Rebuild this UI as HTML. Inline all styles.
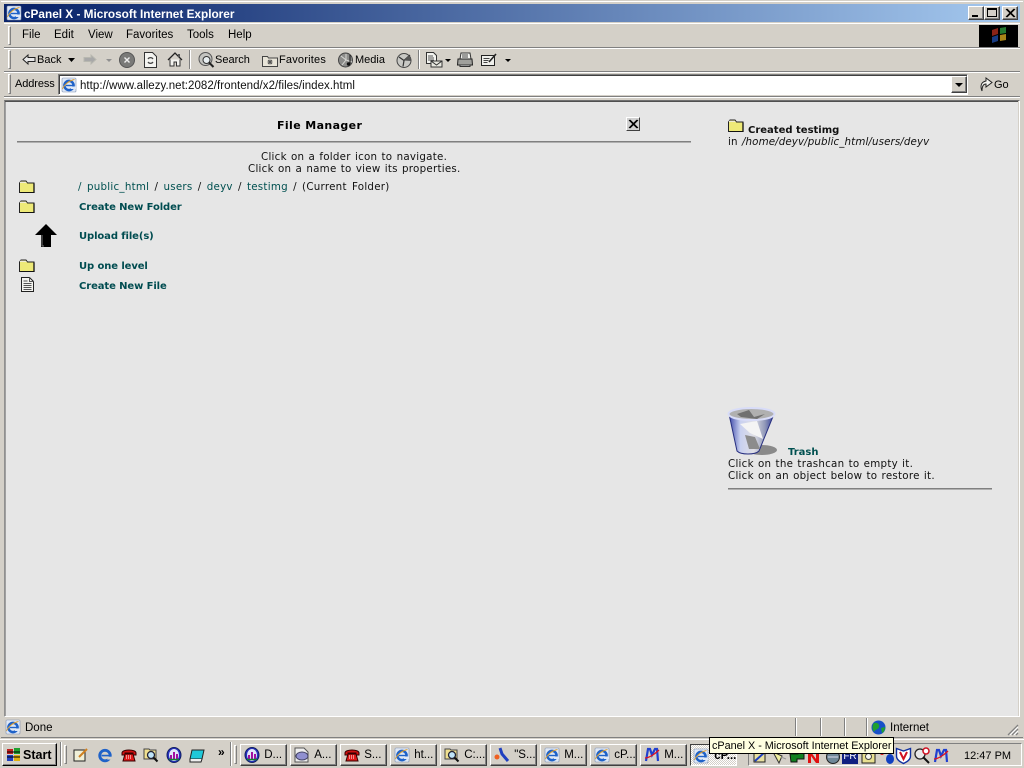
<!DOCTYPE html>
<html><head><meta charset="utf-8"><title>cPanel X - Microsoft Internet Explorer</title>
<style>
html,body{margin:0;padding:0;width:1024px;height:768px;overflow:hidden;background:#d4d0c8;position:relative;font-family:"Liberation Sans",sans-serif;font-size:11px;color:#000}
div,span.t{position:absolute;white-space:nowrap;box-sizing:border-box}
.t{line-height:14px;height:14px}
.v{font-family:"DejaVu Sans",sans-serif;font-size:10.3px;line-height:12px;height:12px;color:#111;letter-spacing:.25px;word-spacing:.7px}
.l{color:#005050}
.b{font-weight:bold;color:#004c50;font-size:10px;letter-spacing:-.1px;word-spacing:0}
.bt{border:1px solid;border-color:#fff #404040 #404040 #fff;background:#d4d0c8;box-shadow:inset -1px -1px 0 #808080}
.hl{left:0;width:1024px;height:1px}
.grip{width:3px;border:1px solid;border-color:#fff #808080 #808080 #fff}
.sep{width:2px;border-left:1px solid #808080;border-right:1px solid #fff}
.tb{top:744px;height:22px;width:47px;border:1px solid;border-color:#fff #404040 #404040 #fff;background:#d4d0c8;box-shadow:inset -1px -1px 0 #808080;font-size:11.5px;line-height:21px;padding-left:20px}
.m{font-size:11.5px}
.k{font-size:11px}
svg{position:absolute;overflow:visible}
</style></head><body>
<svg width="0" height="0" style="position:absolute"><defs>
<symbol id="ie" viewBox="0 0 16 16"><rect x="1" y="1" width="14" height="14" rx="1" fill="#dfe8f6" stroke="#8090b0" stroke-width=".6"/><circle cx="8" cy="8.500" r="4.600" fill="none" stroke="#1f62c8" stroke-width="2.500"/><rect x="5" y="7.800" width="7" height="1.400" fill="#1f62c8"/><rect x="10" y="9.500" width="5" height="2.500" fill="#dfe8f6"/><path d="M1.500 12C3 8 8 3.500 13.500 2.500" fill="none" stroke="#e0a030" stroke-width=".9"/></symbol>
<symbol id="fo" viewBox="0 0 16 13"><path d="M.5 3 2 1h5l1.500 2h6.500v9.500H.5z" fill="#eeea78" stroke="#222"/><path d="M1 1.800h5.500L8 3H1z" fill="#f0ecd8"/><path d="M15 3.500v9.300H1.500" fill="none" stroke="#111" stroke-width="1.300"/></symbol>
<symbol id="pg" viewBox="0 0 13 15"><path d="M.5.500h8l4 4v10H.5z" fill="#f4f4f0" stroke="#222"/><path d="M8.500.500v4h4M2.500 4h4M2.500 6.500h8M2.500 8.500h8M2.500 10.500h8M2.500 12.500h8" fill="none" stroke="#555"/></symbol>
<symbol id="mag" viewBox="0 0 16 16"><path d="M1 2h5l1 1h6v9H1z" fill="#f0e090" stroke="#444"/><circle cx="8" cy="8" r="3.500" fill="#bfe4f8" stroke="#223" stroke-width="1.300"/><path d="m10.500 10.500 4 4" stroke="#111" stroke-width="2"/></symbol>
<symbol id="ph" viewBox="0 0 16 16"><path d="M1 6C1 2 15 2 15 6v2h-3V6H4v2H1z" fill="#d01010" stroke="#300"/><path d="M4 7h8l2 7H2z" fill="#e01818" stroke="#300"/><path d="M5 9h6M5 11h6" stroke="#fff" stroke-dasharray="1 1"/></symbol>
<symbol id="dm" viewBox="0 0 16 16"><ellipse cx="8" cy="8" rx="7" ry="7.500" fill="#2830c0" stroke="#102060"/><ellipse cx="8" cy="8" rx="5" ry="6" fill="#e0e8f8"/><path d="M4 12V8h2v4zM7 12V5h2v7zM10 12V7h2v5z" fill="#a010a0"/><path d="M3 12.500h10" stroke="#108030" stroke-width="1.500"/></symbol>
<symbol id="m" viewBox="0 0 16 16"><path d="M2 14 4 2h2l2 6 3-6h2l1 12" fill="none" stroke="#2040d0" stroke-width="2.200"/><path d="M1 11C5 11 11 7 15 3" fill="none" stroke="#e01020" stroke-width="1.300"/></symbol>
</defs></svg>

<!-- window frame + title -->
<div style="left:0;top:0;width:1024px;height:1px;background:#d4d0c8"></div>
<div style="left:1px;top:1px;width:1022px;height:1px;background:#fff"></div>
<div style="left:4px;top:4px;width:1016px;height:18px;background:linear-gradient(90deg,#0a246a 0%,#0a246a 3%,#a6caf0 100%)"></div>
<svg style="left:6px;top:5px" width="16" height="16"><use href="#ie"/></svg>
<span class="t" style="position:absolute;left:24px;top:7px;color:#fff;font-weight:bold;font-size:11.8px">cPanel X - Microsoft Internet Explorer</span>
<div class="bt" style="left:968px;top:6px;width:16px;height:14px"><div style="left:3px;top:8px;width:6px;height:2px;background:#000"></div></div>
<div class="bt" style="left:984px;top:6px;width:16px;height:14px"><div style="left:2px;top:1px;width:10px;height:9px;border:1px solid #000;border-top-width:2px"></div></div>
<div class="bt" style="left:1002px;top:6px;width:16px;height:14px"><svg style="left:3px;top:2px" width="9" height="8"><path d="M0 0 8 8M1 0 9 8M8 0 0 8M9 0 1 8" stroke="#000"/></svg></div>

<!-- band lines -->
<div class="hl" style="top:23px;background:#fff;left:4px;width:1016px"></div>
<div class="hl" style="top:47px;background:#808080;left:4px;width:1016px"></div>
<div class="hl" style="top:48px;background:#fff;left:4px;width:1016px"></div>
<div class="hl" style="top:71px;background:#808080;left:4px;width:1016px"></div>
<div class="hl" style="top:72px;background:#fff;left:4px;width:1016px"></div>
<div class="hl" style="top:96px;background:#808080;left:4px;width:1016px"></div>
<div class="hl" style="top:97px;background:#fff;left:4px;width:1016px"></div>

<!-- menu -->
<div class="grip" style="left:8px;top:26px;height:19px"></div>
<span class="t m" style="position:absolute;left:22px;top:28px">File</span>
<span class="t m" style="position:absolute;left:54px;top:28px">Edit</span>
<span class="t m" style="position:absolute;left:88px;top:28px">View</span>
<span class="t m" style="position:absolute;left:126px;top:28px">Favorites</span>
<span class="t m" style="position:absolute;left:187px;top:28px">Tools</span>
<span class="t m" style="position:absolute;left:228px;top:28px">Help</span>
<div style="left:979px;top:25px;width:39px;height:22px;background:#000"></div>
<svg style="left:991px;top:27px" width="17" height="16" opacity=".75"><path d="M1 3 7 1v6L1 9z" fill="#b83020"/><path d="M9 1l6-1v6L9 7z" fill="#30a040"/><path d="M1 10l6-2v6l-6 2z" fill="#2050b0"/><path d="M9 8l6-1v6l-6 1z" fill="#e0b020"/></svg>

<!-- toolbar -->
<div class="grip" style="left:8px;top:50px;height:19px"></div>
<svg style="left:21px;top:53px" width="15" height="13"><path d="M7 2 2 6.500 7 11V8.500h7v-4H7z" fill="#e8e8e8" stroke="#222"/></svg>
<span class="t k" style="position:absolute;left:37px;top:53px">Back</span>
<svg style="left:68px;top:58px" width="7" height="4"><path d="M0 0h7L3.500 4z" fill="#000"/></svg>
<svg style="left:83px;top:53px" width="15" height="13"><path d="M8 2l5 4.500L8 11V8.500H1v-4h7z" fill="#a8a8a8" stroke="#b8b8b0"/></svg>
<svg style="left:106px;top:59px" width="6" height="3"><path d="M0 0h6L3 3z" fill="#909090"/></svg>
<svg style="left:119px;top:52px" width="16" height="16"><circle cx="8" cy="8" r="7.500" fill="#7a7a78" stroke="#555"/><path d="m5.500 5.500 5 5m0-5-5 5" stroke="#eee" stroke-width="1.400"/></svg>
<svg style="left:144px;top:52px" width="13" height="16"><path d="M.5.500h8l4 4v11H.5z" fill="#f4f4f0" stroke="#333"/><path d="M4 7a3 3 0 0 1 5 0M9 10a3 3 0 0 1-5 0" fill="none" stroke="#444" stroke-width="1.200"/></svg>
<svg style="left:167px;top:52px" width="16" height="15"><path d="M1 8 8 1l7 7" fill="none" stroke="#222" stroke-width="1.300"/><path d="M3 7.500V14h4v-4h2.500v4H13V7.500" fill="#f4f4f0" stroke="#333"/><rect x="11" y="2" width="2" height="3" fill="#555"/></svg>
<div class="sep" style="left:189px;top:50px;height:19px"></div>
<svg style="left:198px;top:52px" width="17" height="16"><circle cx="7.500" cy="7" r="6.500" fill="#c4c4c0" stroke="#555"/><circle cx="8.500" cy="8" r="3.500" fill="#e8eef0" stroke="#333"/><path d="m11 10.500 4.500 4.500" stroke="#222" stroke-width="2"/></svg>
<span class="t k" style="position:absolute;left:215px;top:53px">Search</span>
<svg style="left:262px;top:54px" width="16" height="13"><path d="M.5 2.500h5l1 1.500h9v8.500H.5z" fill="#e8e4d8" stroke="#444"/><path d="M8 5.500v5M5.500 8h5M6 6l4 4m0-4-4 4" stroke="#555"/></svg>
<span class="t k" style="position:absolute;left:279px;top:53px;letter-spacing:.2px">Favorites</span>
<svg style="left:338px;top:52px" width="17" height="16"><circle cx="7.500" cy="8" r="7" fill="#8c8c8a" stroke="#444"/><path d="M3 4 8 8 4 13M8 2v6l6 2" stroke="#d8d8d4" fill="none"/><path d="M12 3v9" stroke="#111"/><circle cx="10.500" cy="12" r="1.700" fill="#111"/></svg>
<span class="t k" style="position:absolute;left:355px;top:53px">Media</span>
<svg style="left:396px;top:52px" width="17" height="16"><circle cx="8" cy="8.500" r="7" fill="#c8c8c4" stroke="#444"/><path d="M8 8.500 14 3M8 8.500 3 5M8 8.500l-1 6" stroke="#333" stroke-width="1.200"/><path d="M8 8.500 15 9 13 3z" fill="#555"/></svg>
<div class="sep" style="left:418px;top:50px;height:19px"></div>
<svg style="left:426px;top:52px" width="18" height="16"><path d="M.5.500h7l3 3v8H.5z" fill="#f4f4f0" stroke="#333"/><path d="M2 4h5M2 6h6M2 8h6" stroke="#555"/><path d="M5 9h11v6H5z" fill="#e8e8e0" stroke="#333"/><path d="m5 9 5.500 4L16 9" fill="none" stroke="#333"/></svg>
<svg style="left:445px;top:59px" width="6" height="3"><path d="M0 0h6L3 3z" fill="#000"/></svg>
<svg style="left:457px;top:52px" width="16" height="15"><path d="M4 1h9l1 6H3z" fill="#f4f4f0" stroke="#333"/><path d="M1 7h14l.5 6H.5z" fill="#a0a09c" stroke="#222"/><path d="M3 13h10v1.500H3z" fill="#eee" stroke="#333"/><path d="M5 3h6M5 5h6" stroke="#444"/></svg>
<svg style="left:481px;top:52px" width="17" height="15"><path d="M.5 3.500h13v10H.5z" fill="#f0f0ec" stroke="#222"/><path d="M2.500 6.500h6M2.500 8.500h5M2.500 10.500h4" stroke="#444"/><path d="m8 10 7-8" stroke="#222" stroke-width="1.600"/></svg>
<svg style="left:505px;top:59px" width="6" height="3"><path d="M0 0h6L3 3z" fill="#000"/></svg>

<!-- address -->
<div class="grip" style="left:8px;top:74px;height:20px"></div>
<span class="t k" style="position:absolute;left:15px;top:77px;letter-spacing:-.1px">Address</span>
<div style="left:58px;top:74px;width:910px;height:21px;background:#fff;border:1px solid;border-color:#808080 #fff #fff #808080;box-shadow:inset 1px 1px 0 #404040"></div>
<svg style="left:61px;top:77px" width="16" height="16"><use href="#ie"/></svg>
<span class="t" style="position:absolute;left:80px;top:79px;font-size:11.5px;letter-spacing:.04px;color:#101010">http://www.allezy.net:2082/frontend/x2/files/index.html</span>
<div class="bt" style="left:951px;top:76px;width:16px;height:17px"><svg style="left:3px;top:6px" width="8" height="4"><path d="M0 0h8L4 4z" fill="#000"/></svg></div>
<svg style="left:979px;top:76px" width="14" height="17"><path d="M3 15C1 10 2 6 7 5V2l6 4.500L7 11V8C4 8 3 11 3 15z" fill="#f4f4f0" stroke="#222"/></svg>
<span class="t k" style="position:absolute;left:994px;top:78px">Go</span>

<!-- content -->
<div style="left:4px;top:100px;width:1016px;height:617px;background:#e6e6e6;border:1px solid;border-color:#707070 #fff #fff #909090;box-shadow:inset 0 1px 0 #505050,inset 1px 0 0 #a0a0a0"></div>
<div style="left:1018px;top:101px;width:1px;height:615px;background:#d4d0c8"></div>

<span class="t" style="position:absolute;left:277px;top:119px;font-family:'DejaVu Sans',sans-serif;font-weight:bold;font-size:11px;letter-spacing:.38px">File Manager</span>
<div style="left:626px;top:117px;width:14px;height:14px;border:1px solid;border-color:#fff #404040 #404040 #fff;background:#d0d0d0"><svg style="left:2px;top:2px" width="9" height="8"><path d="M0 0 8 8M1 0 9 8M8 0 0 8M9 0 1 8" stroke="#000"/></svg></div>
<div style="left:17px;top:141px;width:674px;height:1px;background:#808080"></div>
<div style="left:17px;top:142px;width:674px;height:1px;background:#b0b0b0"></div>

<span class="t v" style="position:absolute;left:261px;top:151px">Click on a folder icon to navigate.</span>
<span class="t v" style="position:absolute;left:248px;top:163px">Click on a name to view its properties.</span>

<svg style="left:19px;top:180px" width="16" height="13"><use href="#fo"/></svg>
<span class="t v" style="position:absolute;left:78px;top:181px;word-spacing:1.7px"><span class="l">/ public_html</span> / <span class="l">users</span> / <span class="l">deyv</span> / <span class="l">testimg</span> / (Current Folder)</span>
<svg style="left:19px;top:200px" width="16" height="13"><use href="#fo"/></svg>
<span class="t v b" style="position:absolute;left:79px;top:202px">Create New Folder</span>
<svg style="left:34px;top:223px" width="24" height="25"><path d="M12 1 23 12h-6v12H7V12H1z" fill="#000"/><path d="M8 12v11h2" fill="none" stroke="#777"/></svg>
<span class="t v b" style="position:absolute;left:79px;top:231px">Upload file(s)</span>
<svg style="left:19px;top:259px" width="16" height="13"><use href="#fo"/></svg>
<span class="t v b" style="position:absolute;left:79px;top:261px">Up one level</span>
<svg style="left:21px;top:277px" width="13" height="15"><use href="#pg"/></svg>
<span class="t v b" style="position:absolute;left:79px;top:281px">Create New File</span>

<svg style="left:728px;top:119px" width="16" height="13"><use href="#fo"/></svg>
<span class="t v b" style="position:absolute;left:748px;top:125px;color:#111;letter-spacing:0">Created testimg</span>
<span class="t v" style="position:absolute;left:728px;top:136px;letter-spacing:.1px;word-spacing:1px">in <i>/home/deyv/public_html/users/deyv</i></span>

<svg style="left:727px;top:405px" width="52" height="52">
<defs><linearGradient id="tr" x1="0" x2="1"><stop offset="0" stop-color="#3c48a8"/><stop offset=".25" stop-color="#c8d0f0"/><stop offset=".55" stop-color="#e0e0e6"/><stop offset=".8" stop-color="#9098b8"/><stop offset="1" stop-color="#303c98"/></linearGradient></defs>
<ellipse cx="35" cy="45" rx="15" ry="5" fill="#8a8a8a"/>
<path d="M2 9 10 46C14 50 28 50 32 46L47 9z" fill="url(#tr)" stroke="#283080"/>
<ellipse cx="24.500" cy="9" rx="23" ry="6" fill="#b0b0b0" stroke="#d8dcf8" stroke-width="2"/>
<path d="M10 9 22 5 27 12 38 9 30 14 14 12z" fill="#707070"/>
<path d="M13 19 30 16 36 34 23 28z" fill="#f4f4f4"/>
<path d="M18 30 28 32 33 44 22 44z" fill="#8c8c8c"/>
</svg>
<span class="t v b" style="position:absolute;left:788px;top:447px;color:#005050;letter-spacing:0">Trash</span>
<span class="t v" style="position:absolute;left:728px;top:458px">Click on the trashcan to empty it.</span>
<span class="t v" style="position:absolute;left:728px;top:470px">Click on an object below to restore it.</span>
<div style="left:728px;top:488px;width:264px;height:1px;background:#808080"></div>
<div style="left:728px;top:489px;width:264px;height:1px;background:#b0b0b0"></div>

<!-- status bar -->
<svg style="left:5px;top:719px" width="16" height="16"><use href="#ie"/></svg>
<span class="t m" style="position:absolute;left:25px;top:721px">Done</span>
<div style="left:795px;top:718px;width:1px;height:18px;background:#808080"></div><div style="left:796px;top:718px;width:1px;height:18px;background:#fff"></div>
<div style="left:820px;top:718px;width:1px;height:18px;background:#808080"></div><div style="left:821px;top:718px;width:1px;height:18px;background:#fff"></div>
<div style="left:844px;top:718px;width:1px;height:18px;background:#808080"></div><div style="left:845px;top:718px;width:1px;height:18px;background:#fff"></div>
<div style="left:866px;top:718px;width:1px;height:18px;background:#808080"></div><div style="left:867px;top:718px;width:1px;height:18px;background:#fff"></div>
<svg style="left:871px;top:720px" width="15" height="15"><circle cx="7.500" cy="7.500" r="7" fill="#1850c8"/><path d="M3 3C6 2 9 4 8 7S4 9 3 12C1 9 1 5 3 3zM10 8l4-1c0 3-1 5-3 6z" fill="#20a030"/></svg>
<span class="t m" style="position:absolute;left:890px;top:721px">Internet</span>
<svg style="left:1007px;top:724px" width="12" height="12"><path d="M11 1 1 11M11 5 5 11M11 9 9 11" stroke="#808080" stroke-width="1.300"/><path d="M11 3 3 11M11 7 7 11" stroke="#fff"/></svg>
<div class="hl" style="top:737px;background:#808080;left:1px;width:1022px"></div>
<div class="hl" style="top:738px;background:#d4d0c8"></div>
<div class="hl" style="top:739px;background:#fff"></div>

<!-- taskbar -->
<div class="bt" style="left:2px;top:743px;width:55px;height:23px;border-color:#fff #000 #000 #fff"></div>
<svg style="left:6px;top:747px" width="16" height="15"><path d="M1 2h6v5H1z" fill="#c02020"/><path d="M8 1h6v6H8z" fill="#20a030"/><path d="M1 8h6v6H1z" fill="#2040c0"/><path d="M8 8h6v6H8z" fill="#e0b010"/><path d="M1 5h13M1 10h13" stroke="#000"/></svg>
<span class="t" style="position:absolute;left:23px;top:748px;font-weight:bold;font-size:12.500px">Start</span>
<div class="sep" style="left:60px;top:742px;height:24px"></div>
<div class="grip" style="left:64px;top:745px;height:19px"></div>
<svg style="left:73px;top:747px" width="16" height="16"><path d="M1 3h11v11H1z" fill="#f0f0d8" stroke="#222"/><path d="m6 10 8-8" stroke="#d08020" stroke-width="2"/></svg>
<svg style="left:97px;top:747px" width="16" height="16" viewBox="1 1 14 14"><circle cx="8" cy="8.500" r="4.600" fill="none" stroke="#1f62c8" stroke-width="2.500"/><rect x="5" y="7.800" width="7" height="1.400" fill="#1f62c8"/><rect x="10" y="9.500" width="5" height="2.500" fill="#d4d0c8"/></svg>
<svg style="left:121px;top:747px" width="16" height="16"><use href="#ph"/></svg>
<svg style="left:143px;top:747px" width="16" height="16"><use href="#mag"/></svg>
<svg style="left:166px;top:747px" width="16" height="16"><use href="#dm"/></svg>
<svg style="left:189px;top:747px" width="16" height="16"><path d="M3 3h12l-2 9H1z" fill="#20c8d8" stroke="#222"/><path d="M1 12v3h11l1-3" fill="#eee" stroke="#222"/></svg>
<span class="t" style="position:absolute;left:218px;top:745px;font-weight:bold;font-size:12px">»</span>
<div class="sep" style="left:230px;top:742px;height:24px"></div>
<div class="grip" style="left:234px;top:745px;height:19px"></div>

<div class="tb" style="left:240px">&nbsp;D...</div>
<svg style="left:244px;top:747px" width="16" height="16"><use href="#dm"/></svg>
<div class="tb" style="left:290px">&nbsp;A...</div>
<svg style="left:294px;top:747px" width="16" height="16"><path d="M1 1h9l4 4v10H1z" fill="#eee" stroke="#555"/><ellipse cx="8" cy="9" rx="6" ry="4" fill="#9090d0" stroke="#446"/></svg>
<div class="tb" style="left:340px">&nbsp;S...</div>
<svg style="left:344px;top:747px" width="16" height="16"><use href="#ph"/></svg>
<div class="tb" style="left:390px">&nbsp;ht...</div>
<svg style="left:394px;top:747px" width="16" height="16"><use href="#ie"/></svg>
<div class="tb" style="left:440px">&nbsp;C:...</div>
<svg style="left:444px;top:747px" width="16" height="16"><use href="#mag"/></svg>
<div class="tb" style="left:490px">&nbsp;&quot;S...</div>
<svg style="left:494px;top:747px" width="16" height="16"><path d="M6 1l2 6 6 7" fill="none" stroke="#2040c0" stroke-width="3"/><circle cx="3" cy="10" r="2.500" fill="#f06020"/></svg>
<div class="tb" style="left:540px">&nbsp;M...</div>
<svg style="left:544px;top:747px" width="16" height="16"><use href="#ie"/></svg>
<div class="tb" style="left:590px">&nbsp;cP...</div>
<svg style="left:594px;top:747px" width="16" height="16"><use href="#ie"/></svg>
<div class="tb" style="left:640px">&nbsp;M...</div>
<svg style="left:644px;top:747px" width="16" height="16"><use href="#m"/></svg>
<div style="left:690px;top:744px;width:47px;height:22px;border:1px solid;border-color:#404040 #fff #fff #404040;background:repeating-conic-gradient(#fff 0 25%,#d4d0c8 0 50%) 0 0/2px 2px;font-weight:bold;font-size:11.5px;line-height:22px;padding-left:20px">&nbsp;cP...</div>
<svg style="left:693px;top:748px" width="16" height="16"><use href="#ie"/></svg>

<!-- tray -->
<div style="left:748px;top:743px;width:274px;height:23px;border:1px solid;border-color:#808080 #fff #fff #808080"></div>
<svg style="left:752px;top:749px" width="16" height="15"><path d="M2 4h11v9H2z" fill="#e8e0a0" stroke="#222"/><path d="M3 12 13 3" stroke="#2040c0" stroke-width="2"/></svg>
<svg style="left:771px;top:749px" width="16" height="15"><path d="M2 3 11 7 8 14z" fill="#f0f0a0" stroke="#333"/><path d="m10 8 5 2" stroke="#999"/></svg>
<svg style="left:789px;top:749px" width="16" height="15"><path d="M1 5h8l2-2h4v7H8v3H2z" fill="#108020" stroke="#111"/></svg>
<svg style="left:807px;top:751px" width="13" height="13"><path d="M1 12V1h3l5 7V1h3v11H9L4 5v7z" fill="#e01010"/></svg>
<svg style="left:825px;top:749px" width="16" height="15"><circle cx="8" cy="8" r="6.500" fill="#708898" stroke="#222"/><path d="M3 8h10" stroke="#dde"/></svg>
<div style="left:842px;top:750px;width:16px;height:14px;background:#102080;color:#fff;font-size:10px;line-height:14px;text-align:center">FR</div>
<svg style="left:861px;top:749px" width="15" height="15"><path d="M1 1h13v13H1z" fill="#e8e090" stroke="#222"/><circle cx="7.500" cy="7.500" r="3" fill="#f8f8f0" stroke="#444"/></svg>
<svg style="left:879px;top:749px" width="16" height="15"><circle cx="3" cy="4" r="2" fill="#e02020"/><ellipse cx="11" cy="10" rx="4" ry="5" fill="#1040c0"/></svg>
<svg style="left:896px;top:747px" width="15" height="17"><path d="M.5 1.500 7.500 4l7-2.500V9c0 4-4 6-7 7.500C4.500 15 .5 13 .5 9z" fill="#fff" stroke="#1030a0" stroke-width="1.400"/><path d="m4 5 3.500 7L11 5" fill="none" stroke="#d01020" stroke-width="2"/></svg>
<svg style="left:914px;top:747px" width="17" height="17"><circle cx="6" cy="7" r="5" fill="#e8e8e8" stroke="#222" stroke-width="1.300"/><circle cx="12" cy="4" r="3" fill="#fff" stroke="#d01020" stroke-width="1.500"/><path d="m9 10 6 6" stroke="#111" stroke-width="2"/></svg>
<svg style="left:933px;top:748px" width="16" height="16"><use href="#m"/></svg>
<span class="t k" style="position:absolute;left:964px;top:749px">12:47 PM</span>

<!-- tooltip -->
<div style="left:709px;top:737px;width:185px;height:17px;background:#ffffe1;border:1px solid #000;font-size:10.8px;line-height:16px;padding-left:2px;overflow:hidden">cPanel X - Microsoft Internet Explorer</div>
</body></html>
